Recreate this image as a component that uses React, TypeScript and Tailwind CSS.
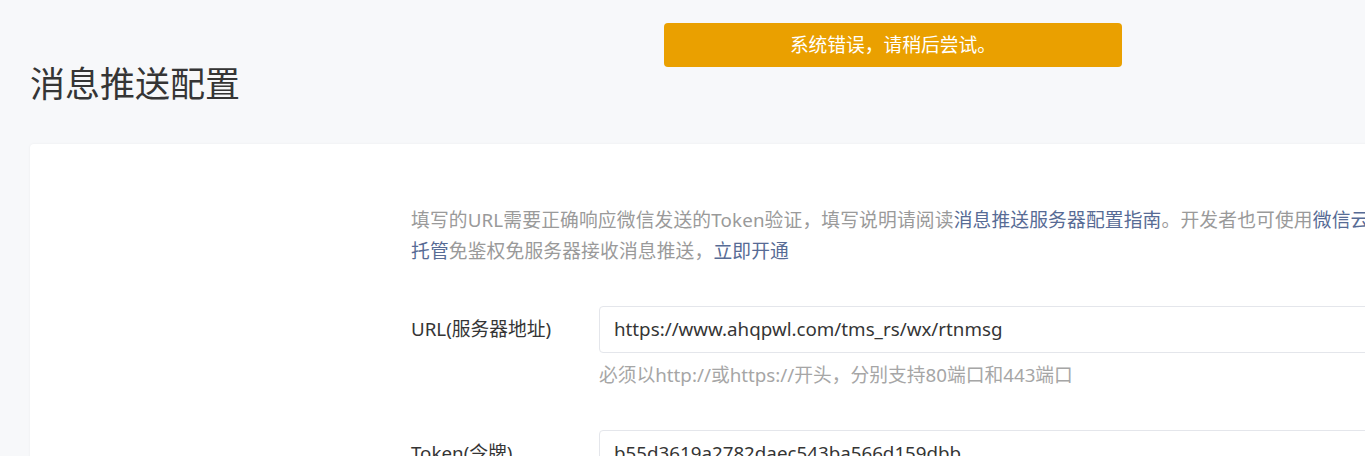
import React from 'react';

const fieldRows = [
    { label: "URL(服务器地址)", value: "https://www.ahqpwl.com/tms_rs/wx/rtnmsg", hint: "必须以http://或https://开头，分别支持80端口和443端口" },
    { label: "Token(令牌)", value: "b55d3619a2782daec543ba566d159dbb", hint: "必须为英文或数字，长度为3-32字符。" },
];

export default function App() {
    return (
        <div
            className="relative h-[456px] w-full overflow-hidden bg-[#f7f8fa] text-[#353535]"
            style={{ fontFamily: '"Noto Sans", "Noto Sans CJK SC", sans-serif' }}
        >
            {/* Toast */}
            <div className="absolute left-[664px] top-[23px] flex h-[44px] w-[458px] items-center justify-center rounded-[4px] bg-[#eaa000] text-[18.75px] text-white">
                系统错误，请稍后尝试。
            </div>

            <div className="w-[1700px] pl-[30px] pt-[60px]">
                <h1 className="text-[35px] leading-[48px] font-normal text-[#353535]">消息推送配置</h1>

                <div className="mt-[36px] rounded-[4px] bg-white pl-[381px] pt-[60px] pb-10 shadow-[0_0_3px_rgba(0,0,0,0.05)]">
                    <p className="text-[18.75px] leading-[31px] tracking-[0.15px] text-[#9a9a9a]">
                        填写的URL需要正确响应微信发送的Token验证，填写说明请阅读
                        <span className="text-[#576b95]">消息推送服务器配置指南</span>
                        。开发者也可使用<span className="text-[#576b95]">微信云</span>
                        <br />
                        <span className="text-[#576b95]">托管</span>免鉴权免服务器接收消息推送，
                        <span className="text-[#576b95]">立即开通</span>
                    </p>

                    <div className="mt-[40px] flex flex-col gap-[42px]">
                        {fieldRows.map((row, i) => (
                            <div key={i} className="flex">
                                <div className="flex h-[47px] w-[188px] shrink-0 items-center text-[18.75px]">
                                    {row.label}
                                </div>
                                <div className="w-[900px]">
                                    <div className="flex h-[47px] items-center rounded-[4px] border border-[#e4e6eb] px-[14px] text-[18.75px] text-[#353535]">
                                        {row.value}
                                    </div>
                                    <div className="mt-[9px] text-[18.75px] leading-[26px] text-[#a6a6a6]">{row.hint}</div>
                                </div>
                            </div>
                        ))}
                    </div>
                </div>
            </div>
        </div>
    );
}
